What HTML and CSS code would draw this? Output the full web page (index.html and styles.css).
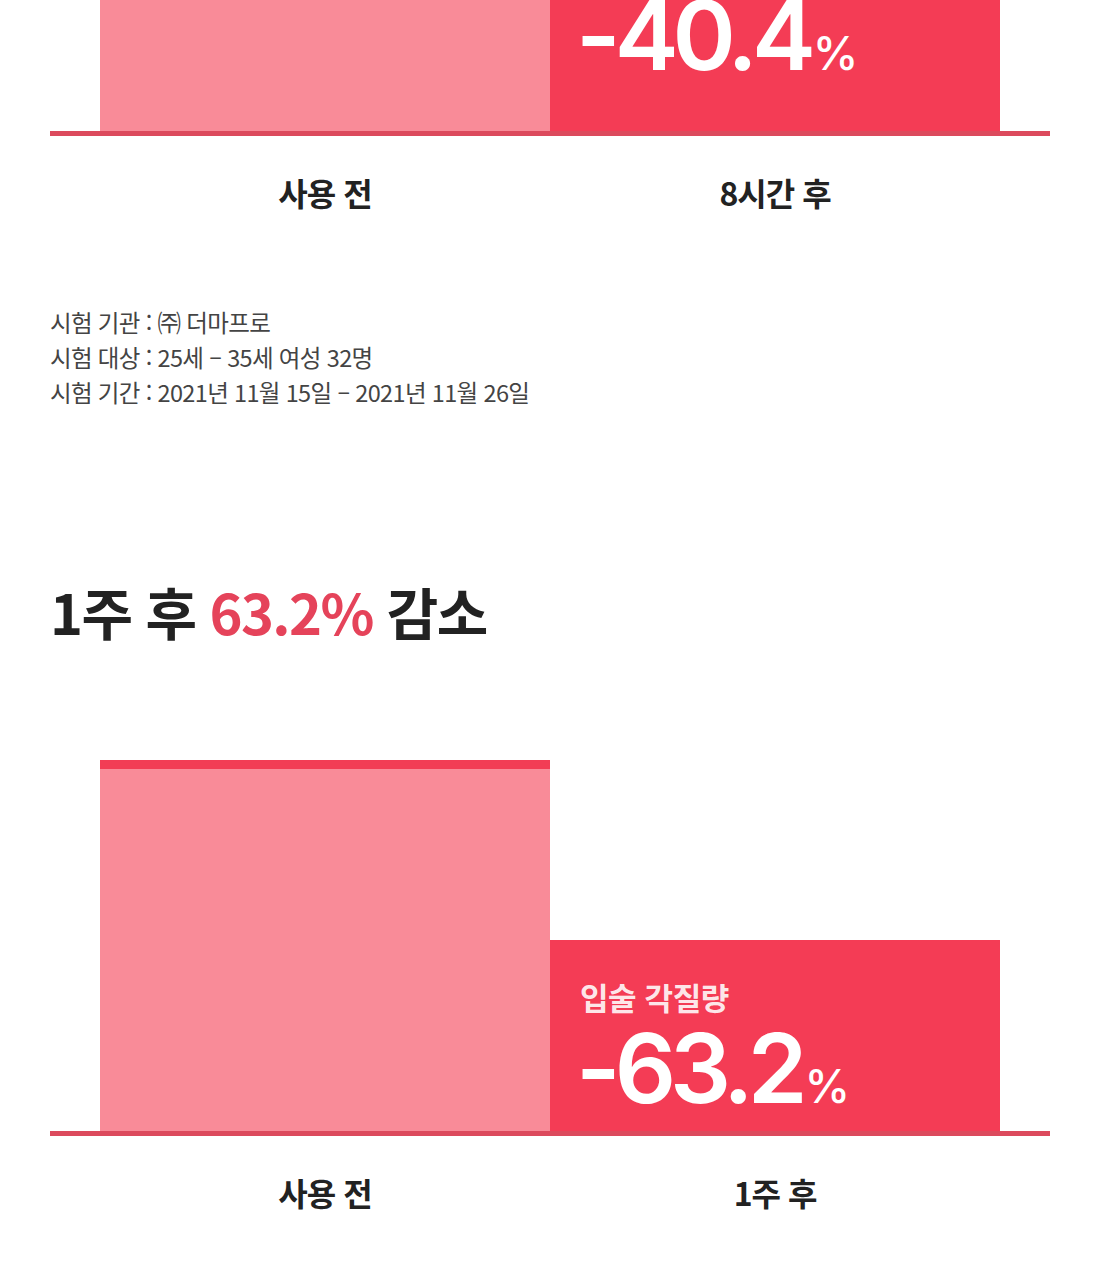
FILE: index.html
```html
<!DOCTYPE html>
<html lang="ko">
<head>
<meta charset="utf-8">
<title>입술 각질량 감소</title>
<link rel="stylesheet" href="styles.css">
</head>
<body>
<main class="page">
  <section class="result result-first">
    <div class="chart">
      <div class="bar bar-before"></div>
      <div class="bar bar-after bar-after-8h">
        <p class="bar-title">입술 각질량</p>
        <p class="bar-value">-40.4<span class="pct">%</span></p>
      </div>
    </div>
    <div class="labels">
      <span class="label">사용 전</span>
      <span class="label">8시간 후</span>
    </div>
  </section>

  <ul class="notes">
    <li>시험 기관 : ㈜ 더마프로</li>
    <li>시험 대상 : 25세 – 35세 여성 32명</li>
    <li>시험 기간 : 2021년 11월 15일 – 2021년 11월 26일</li>
  </ul>

  <section class="result result-second">
    <h2 class="heading">1주 후 <em class="accent">63.2%</em> 감소</h2>
    <div class="chart">
      <div class="bar bar-before bar-topline"></div>
      <div class="bar bar-after bar-after-1w">
        <p class="bar-title">입술 각질량</p>
        <p class="bar-value">-63.2<span class="pct">%</span></p>
      </div>
    </div>
    <div class="labels">
      <span class="label">사용 전</span>
      <span class="label">1주 후</span>
    </div>
  </section>
</main>
</body>
</html>
```

FILE: styles.css
```css
* { box-sizing: border-box; }
html, body { margin: 0; padding: 0; background: #ffffff; }
body {
  font-family: "Noto Sans CJK KR", "Noto Sans", sans-serif;
  color: #222222;
  overflow: hidden;
}
.page {
  display: flex;
  flex-direction: column;
  padding: 0 50px;
  width: 1100px;
}
.result { display: flex; flex-direction: column; }
.result-first { margin-top: -240px; }

.chart {
  display: flex;
  align-items: flex-end;
  height: 376px;
  padding: 0 50px;
  border-bottom: 5px solid #dc4a5d;
}
.bar { width: 450px; flex: 0 0 450px; }
.bar-before {
  height: 371px;
  background: #f98b98;
}
.bar-topline { border-top: 9px solid #f23d55; }
.bar-after {
  background: #f43c55;
  padding: 39px 0 0 30px;
  color: #ffffff;
}
.bar-after-8h { height: 224px; }
.bar-after-1w { height: 191px; }
.bar-title {
  margin: 0;
  font-size: 31px;
  line-height: 36px;
  font-weight: 700;
  letter-spacing: -0.4px;
  color: rgba(255,255,255,0.9);
}
.bar-value {
  margin: -4px 0 0 -4px;
  font-family: "Inter", "Noto Sans", sans-serif;
  font-size: 96px;
  line-height: 1.2;
  font-weight: 600;
  letter-spacing: -6px;
  color: #ffffff;
}
.pct {
  font-size: 46px;
  font-weight: 500;
  letter-spacing: 0;
  margin-left: 3px;
}

.labels {
  display: flex;
  padding: 38px 50px 0;
}
.label {
  flex: 0 0 450px;
  text-align: center;
  font-size: 32px;
  line-height: 36px;
  font-weight: 700;
  letter-spacing: -1px;
  color: #222222;
}

.notes {
  list-style: none;
  margin: 95px 0 0;
  padding: 0;
  font-size: 23.5px;
  line-height: 35px;
  color: #444444;
  letter-spacing: -0.65px;
}

.result-second { margin-top: 166px; }
.heading {
  margin: 0 0 119px;
  font-size: 56px;
  line-height: 70px;
  font-weight: 700;
  letter-spacing: -1.6px;
  color: #222222;
}
.accent {
  font-style: normal;
  color: #e5435a;
}
.result-second .chart { height: 371px; }
.result-second .bar-before { height: 371px; }
```
